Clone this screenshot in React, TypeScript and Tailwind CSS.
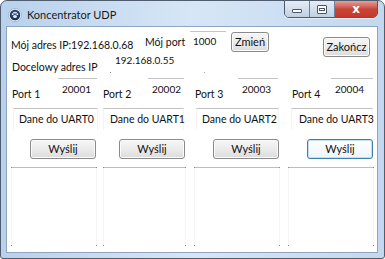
import React from "react";

const font = { fontFamily: 'Lato, "Noto Sans", sans-serif' };

function Btn({ label, cls, focused }: { label: string; cls: string; focused?: boolean }) {
  return (
    <div
      className={
        "flex items-center justify-center h-[20px] rounded-[3px] border text-[11px] text-[#111] " +
        (focused
          ? "border-[#3c7fb1] bg-gradient-to-b from-[#ffffff] to-[#eef6fc] shadow-[inset_0_0_0_1px_#c4e0f4] "
          : "border-[#8a8a8a] bg-gradient-to-b from-[#f6f6f6] via-[#ebebeb] to-[#dcdcdc] shadow-[inset_0_0_0_1px_#fbfbfb] ") +
        cls
      }
    >
      {label}
    </div>
  );
}

type Col = {
  n: number;
  num: string;
  uart: string;
  colCls: string;
  labelCls: string;
  numCls: string;
  daneCls: string;
  btnCls: string;
};

const cols: Col[] = [
  { n: 1, num: "20001", uart: "Dane do UART0", colCls: "ml-[4px] w-[86px]", labelCls: "ml-[1px]", numCls: "ml-[6px] w-[39px]", daneCls: "ml-[2px] w-[85px] pl-[5px]", btnCls: "ml-[19px] w-[66px]" },
  { n: 2, num: "20002", uart: "Dane do UART1", colCls: "ml-[6px] w-[83px]", labelCls: "ml-[0px]", numCls: "ml-[5px] w-[36px]", daneCls: "ml-[0px] w-[81px] pl-[6px]", btnCls: "ml-[16px] w-[66px]" },
  { n: 3, num: "20003", uart: "Dane do UART2", colCls: "ml-[8px] w-[86px]", labelCls: "ml-[1px]", numCls: "ml-[3px] w-[40px]", daneCls: "ml-[2px] w-[83px] pl-[5px]", btnCls: "ml-[19px] w-[66px]" },
  { n: 4, num: "20004", uart: "Dane do UART3", colCls: "ml-[8px] w-[86px]", labelCls: "ml-[4px]", numCls: "ml-[-1px] w-[42px]", daneCls: "ml-[3px] w-[82px] pl-[7px]", btnCls: "ml-[19px] w-[66px]" },
];

function Column({ c }: { c: Col }) {
  return (
    <div className={"flex flex-col " + c.colCls}>
      <div className="flex h-[30px]">
        <div className={"mt-[8px] h-[16px] leading-[16px] w-[40px] whitespace-nowrap " + c.labelCls}>Port {c.n}</div>
        <div className={"h-[26px] border-t border-t-[#c2c2c2] " + c.numCls}>
          <div className="pl-[4px] mt-[2px] leading-[16px] text-[10px]">{c.num}</div>
        </div>
      </div>
      <div className={"h-[22px] border-t border-t-[#c2c2c2] border-x border-x-[#f4f4f4] " + c.daneCls}>
        <div className="mt-[2px] leading-[16px] whitespace-nowrap">{c.uart}</div>
      </div>
      <div className="h-[9px]" />
      <Btn label="Wyślij" cls={c.btnCls} focused={c.n === 4} />
      <div className="h-[8px]" />
      <div className="relative h-[79px] border-t border-t-[#bcbcbc] border-x border-x-[#f5f5f5]">
        <div className="absolute left-[-1px] bottom-0 w-[1px] h-[1px] bg-[#8a8a8a]" />
        <div className="absolute right-[-1px] bottom-0 w-[1px] h-[1px] bg-[#8a8a8a]" />
        <div className="absolute left-[-1px] top-[-1px] w-[1px] h-[1px] bg-[#8a8a8a]" />
        <div className="absolute right-[-1px] top-[-1px] w-[1px] h-[1px] bg-[#8a8a8a]" />
      </div>
    </div>
  );
}

function AppIcon() {
  return (
    <svg width="14" height="14" viewBox="0 0 14 14">
      <defs>
        <radialGradient id="g" cx="0.5" cy="0.4" r="0.6">
          <stop offset="0" stopColor="#3a5f9a" />
          <stop offset="1" stopColor="#14264a" />
        </radialGradient>
      </defs>
      <circle cx="7" cy="7" r="6.6" fill="#dfe9f5" stroke="#8fa6c4" strokeWidth="0.6" />
      <circle cx="7" cy="7" r="5.2" fill="url(#g)" />
      <ellipse cx="7" cy="8.4" rx="1.9" ry="1.5" fill="#e8eef6" />
      <circle cx="4.6" cy="6.2" r="0.9" fill="#e8eef6" />
      <circle cx="6.1" cy="4.7" r="0.9" fill="#e8eef6" />
      <circle cx="7.9" cy="4.7" r="0.9" fill="#e8eef6" />
      <circle cx="9.4" cy="6.2" r="0.9" fill="#e8eef6" />
    </svg>
  );
}

export default function App() {
  return (
    <div
      className="w-[385px] h-[259px] flex flex-col rounded-t-[7px] rounded-b-[3px] border border-[#4f5d6e] bg-gradient-to-r from-[#b9d1ec] via-[#d6e6f6] to-[#c3d8ef] text-[10.5px] text-[#111] overflow-hidden"
      style={font}
    >
      {/* title bar */}
      <div className="flex h-[25px] shrink-0">
        <div className="ml-[7px] mt-[7px]">
          <AppIcon />
        </div>
        <div className="ml-[5px] mt-[6px] leading-[16px] text-[11px] text-[#1a1a1a]">Koncentrator UDP</div>
        <div className="ml-auto mr-[6px] flex h-[18px] -mt-[1px] rounded-b-[5px] border border-[#4b5a6d] overflow-hidden shadow-[0_1px_0_#e6eef8]">
          <div className="w-[25px] flex items-center justify-center bg-gradient-to-b from-[#e4ecf6] via-[#d3dfed] to-[#bfcfe3] border-r border-[#6f819a]">
            <div className="mt-[4px] w-[10px] h-[4px] rounded-[1px] border border-[#4a5668] bg-white" />
          </div>
          <div className="w-[25px] flex items-center justify-center bg-gradient-to-b from-[#e4ecf6] via-[#d3dfed] to-[#bfcfe3] border-r border-[#6f819a]">
            <div className="w-[10px] h-[9px] rounded-[1px] border border-[#4a5668] bg-white flex items-center justify-center">
              <div className="w-[6px] h-[3px] border border-[#4a5668]" />
            </div>
          </div>
          <div className="w-[42px] flex items-center justify-center bg-gradient-to-b from-[#e3a196] via-[#c8473a] to-[#c7372a]">
            <span className="text-white font-bold text-[12px] leading-none" style={{ fontFamily: '"DejaVu Sans", sans-serif' }}>x</span>
          </div>
        </div>
      </div>
      {/* client */}
      <div className="ml-[5px] mr-[6px] h-[227px] border border-[#8ea6c2] bg-white flex flex-col">
        <div className="flex h-[51px]">
          <div className="flex flex-col w-[310px]">
            <div className="flex h-[26px]">
              <div className="ml-[4px] mt-[10px] w-[134px] leading-[16px] whitespace-nowrap">Mój adres IP:192.168.0.68</div>
              <div className="mt-[7px] w-[45px] leading-[16px] whitespace-nowrap">Mój port</div>
              <div className="mt-[4px] w-[36px] h-[22px] border-t border-t-[#c4c4c4]">
                <div className="pl-[3px] mt-[1px] leading-[16px] text-[10px]">1000</div>
              </div>
              <Btn label="Zmień" cls="ml-[5px] mt-[5px] w-[38px]" />
            </div>
            <div className="flex h-[25px]">
              <div className="ml-[5px] mt-[6px] w-[98px] leading-[16px] whitespace-nowrap">Docelowy adres IP</div>
              <div className="relative w-[95px] h-[20px]">
                <div className="pl-[5px] -mt-[1px] leading-[16px] text-[10px]">192.168.0.55</div>
                <div className="absolute left-0 bottom-0 w-[1px] h-[1px] bg-[#888]" />
                <div className="absolute right-0 bottom-0 w-[1px] h-[1px] bg-[#aaa]" />
              </div>
            </div>
          </div>
          <Btn label="Zakończ" cls="ml-[6px] mt-[10px] w-[47px]" />
        </div>
        <div className="flex">
          {cols.map((c) => (
            <Column key={c.n} c={c} />
          ))}
        </div>
      </div>
    </div>
  );
}
